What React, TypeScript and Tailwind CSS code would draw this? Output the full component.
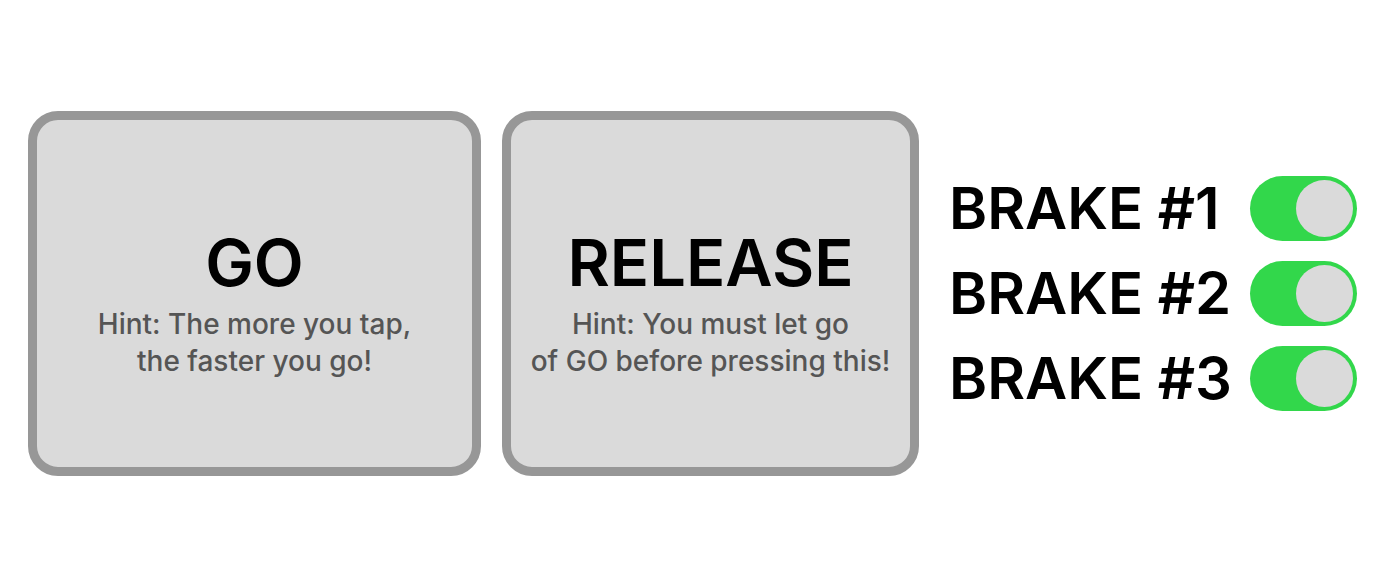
import { useId, useState } from "react";

type ActionProps = { title: string; hint: [string, string] };

function ActionButton({ title, hint }: ActionProps) {
  return (
    <button
      type="button"
      className="flex h-[365px] w-full min-w-0 flex-col items-center justify-center gap-2 rounded-[30px] border-[9px] border-[#979797] bg-[#dadada] pt-5 text-center"
    >
      <span className="text-[65px] leading-[70px] font-semibold text-black">{title}</span>
      <span className="text-[28px] leading-[37px] font-medium whitespace-nowrap text-[#555555]">
        {hint[0]}
        <br />
        {hint[1]}
      </span>
    </button>
  );
}

function BrakeSwitch({ label }: { label: string }) {
  const id = useId();
  const [on, setOn] = useState(true);
  return (
    <div className="flex items-center justify-between">
      <label htmlFor={id} className="text-[58px] leading-[65px] font-semibold whitespace-nowrap text-black">
        {label}
      </label>
      <input
        id={id}
        type="checkbox"
        role="switch"
        checked={on}
        onChange={(event) => setOn(event.target.checked)}
        className="h-[65px] w-[107px] shrink-0 cursor-pointer appearance-none rounded-full bg-[#b4b4b4] p-1 before:block before:size-[57px] before:rounded-full before:bg-[#dadada] checked:bg-[#32d74b] checked:before:ml-auto"
      />
    </div>
  );
}

export default function App() {
  return (
    <main className="flex min-h-screen items-center bg-white pr-[43px] pl-7 font-['Inter',sans-serif]">
      <div className="grid min-w-0 flex-1 grid-cols-[453fr_417fr] gap-[21px]">
        <ActionButton title="GO" hint={["Hint: The more you tap,", "the faster you go!"]} />
        <ActionButton title="RELEASE" hint={["Hint: You must let go", "of GO before pressing this!"]} />
      </div>
      <div className="ml-[30px] flex w-[408px] shrink-0 flex-col gap-5">
        <BrakeSwitch label="BRAKE #1" />
        <BrakeSwitch label="BRAKE #2" />
        <BrakeSwitch label="BRAKE #3" />
      </div>
    </main>
  );
}
